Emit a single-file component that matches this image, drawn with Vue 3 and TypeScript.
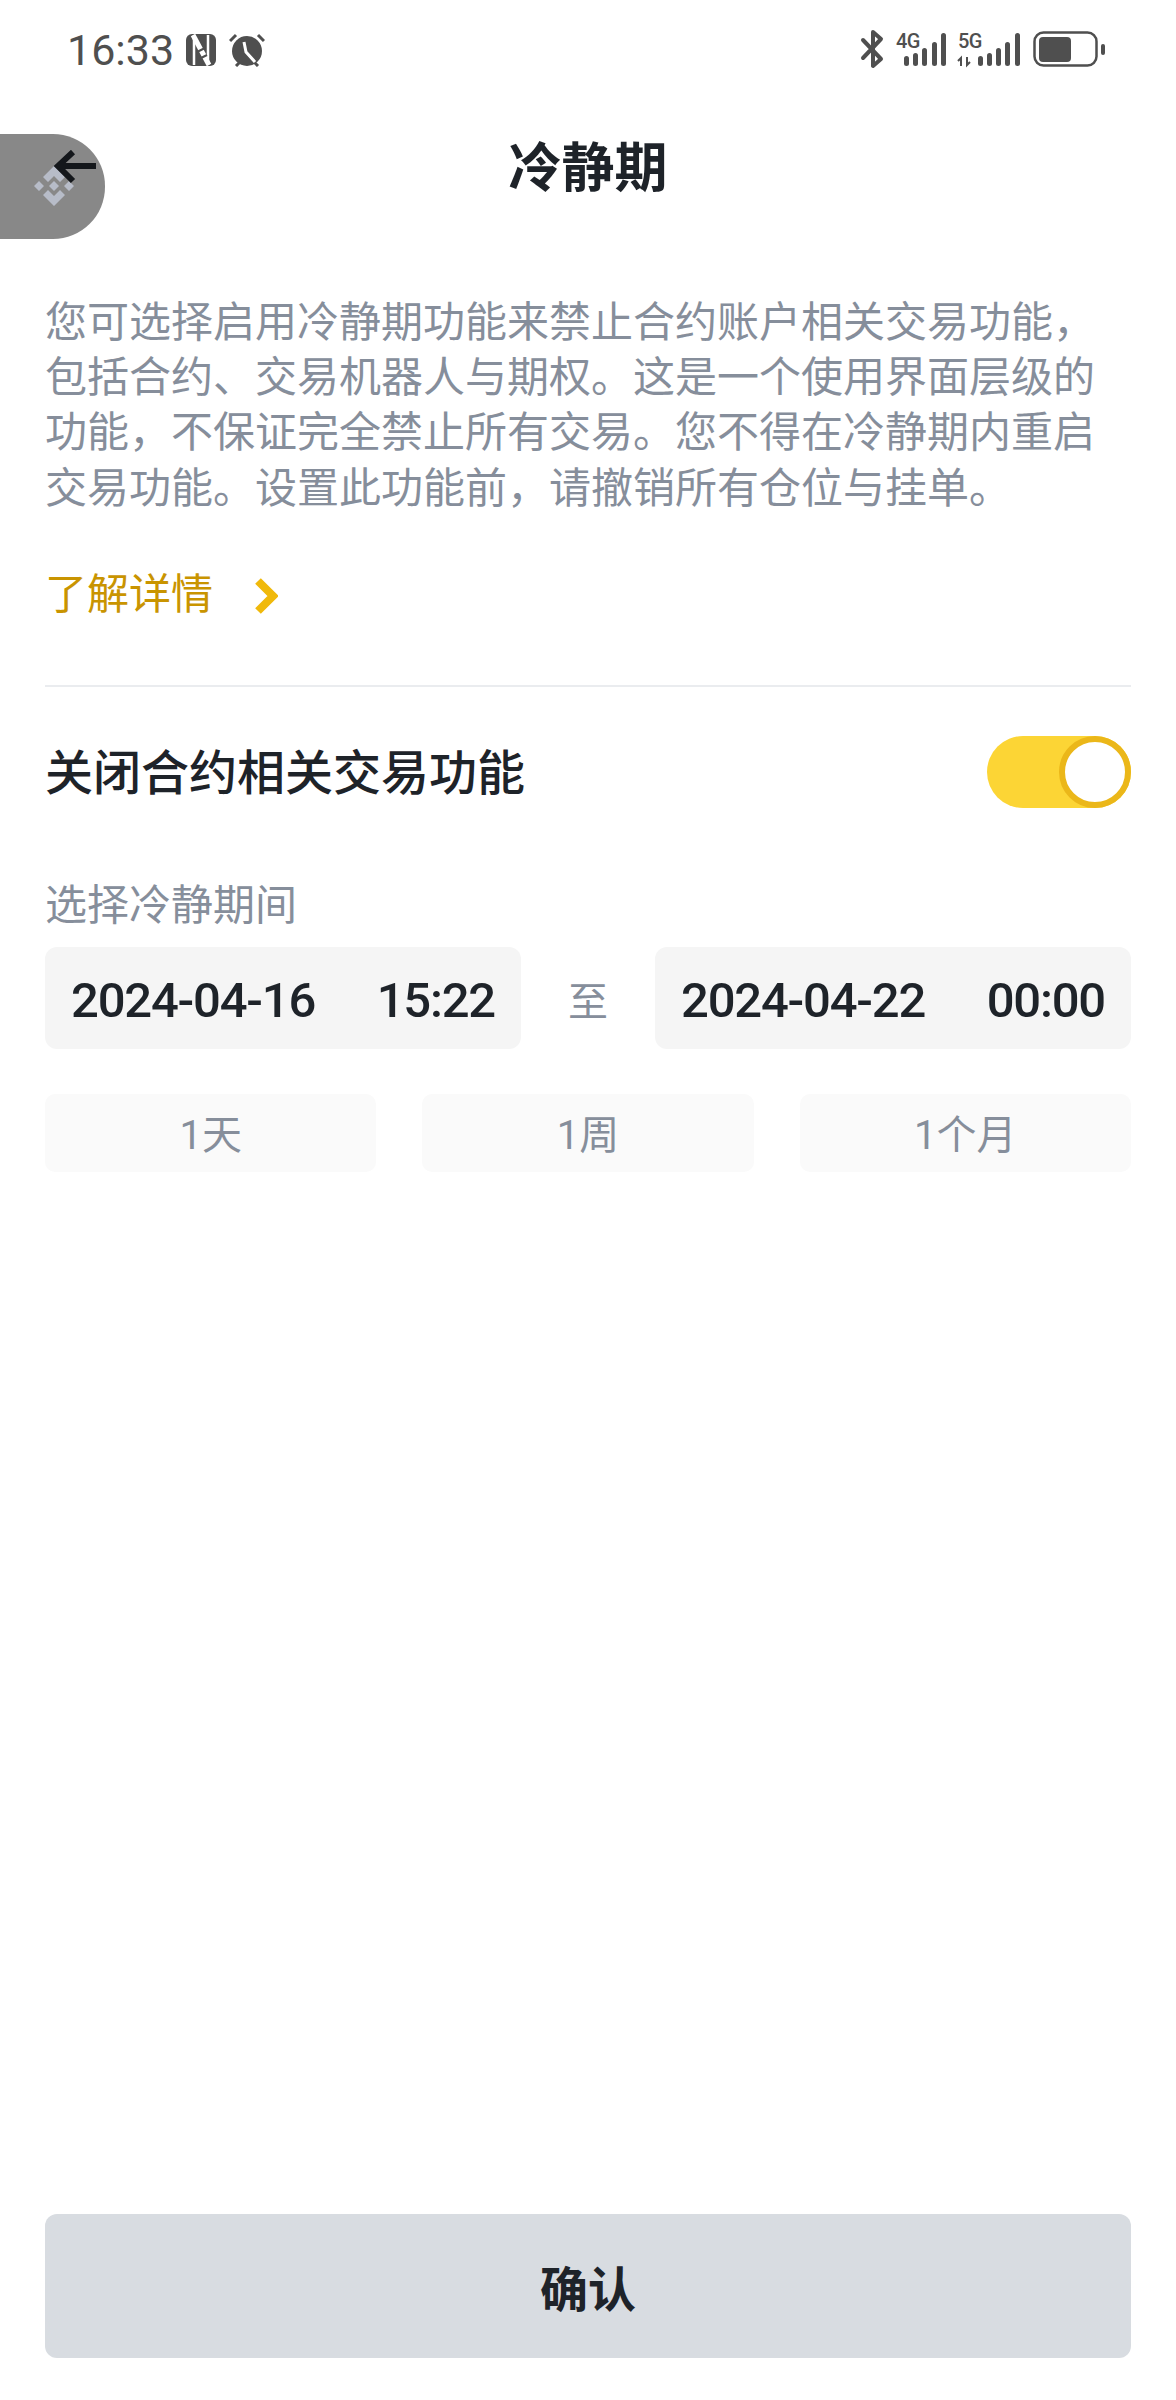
<script setup lang="ts">
const bars = (x: number[]) => x.map((v, i) => ({ x: v, y: [56, 53, 48, 42, 33][i], h: [10, 13, 18, 24, 33][i] }));
const bars4 = bars([44, 53, 62, 72, 81]);
const bars5 = bars([118, 127, 136, 145, 155]);
const presets: string[] = ['1天', '1周', '1个月'];
</script>

<template>
  <div class="page">
    <div class="status">
      <div class="status-left">
        <span class="clock">16:33</span>
        <svg class="nfc" width="32" height="34" viewBox="0 0 32 34">
          <rect x="1" y="1" width="30" height="32" rx="6" fill="#4f4f4f" />
          <path d="M9 32V2M23 32V2" fill="none" stroke="#fff" stroke-width="2.500" />
          <path d="M8 2l16 30" fill="none" stroke="#fff" stroke-width="5" />
          <path d="M12 19l8-4M14 26l8-4" fill="none" stroke="#4f4f4f" stroke-width="2" />
        </svg>
        <svg class="alarm" width="36" height="34" viewBox="0 0 36 34">
          <circle cx="18" cy="18" r="15" fill="#4f4f4f" />
          <path d="M1 8l6-6M35 8l-6-6M7 33l4-4M29 33l-4-4" stroke="#4f4f4f" stroke-width="3" fill="none" />
          <path d="M15 9l2 10 9 10" stroke="#fff" stroke-width="3" fill="none" />
        </svg>
      </div>
      <svg class="status-right" width="246" height="40" viewBox="860 30 246 40">
        <g transform="translate(860 0)">
          <path d="M3 40l18 19-8 7V32l8 7L3 58" fill="none" stroke="#4f4f4f" stroke-width="4" stroke-linejoin="round" stroke-linecap="round" />
          <text x="36" y="48" class="net">4G</text>
          <rect v-for="b in bars4" :key="'a' + b.x" :x="b.x" :y="b.y" width="5" :height="b.h" rx="2.5" fill="#4f4f4f" />
          <text x="98" y="48" class="net">5G</text>
          <path d="M101 66v-8l-3 3M107 57v8l3-3" fill="none" stroke="#4f4f4f" stroke-width="2" />
          <rect v-for="b in bars5" :key="'b' + b.x" :x="b.x" :y="b.y" width="5" :height="b.h" rx="2.5" fill="#4f4f4f" />
          <rect x="174.500" y="32.500" width="62" height="33" rx="9" fill="none" stroke="#4f4f4f" stroke-width="2.500" />
          <rect x="179" y="37" width="32" height="25" rx="4" fill="#4f4f4f" />
          <rect x="241" y="44" width="4" height="11" rx="2" fill="#4f4f4f" />
        </g>
      </svg>
    </div>

    <header class="header">
      <h1 class="title">冷静期</h1>
      <div class="pill">
        <svg class="logo" width="44" height="44" viewBox="0 0 44 44">
          <g fill="#b7bcc8">
            <path d="M22 2l11 11-5 5-6-6-6 6-5-5z" />
            <path d="M22 42L11 31l5-5 6 6 6-6 5 5z" />
            <path d="M22 17l5 5-5 5-5-5z" />
            <path d="M7 17l5 5-5 5-5-5zM37 17l5 5-5 5-5-5z" />
          </g>
        </svg>
      </div>
      <svg class="back" width="44" height="34" viewBox="0 0 44 34">
        <path d="M43 16H6M20 2L5 16l15 15" fill="none" stroke="#14171b" stroke-width="6" />
      </svg>
    </header>

    <main class="content">
      <p class="desc">您可选择启用冷静期功能来禁止合约账户相关交易功能，包括合约、交易机器人与期权。这是一个使用界面层级的功能，不保证完全禁止所有交易。您不得在冷静期内重启交易功能。设置此功能前，请撤销所有仓位与挂单。</p>
      <div class="more">
        <span>了解详情</span>
        <svg width="24" height="36" viewBox="0 0 24 36">
          <path d="M4 3l15 15L4 33" fill="none" stroke="#f0b90b" stroke-width="8" />
        </svg>
      </div>
      <div class="divider"></div>
      <div class="switch-row">
        <span class="switch-label">关闭合约相关交易功能</span>
        <div class="toggle"><div class="knob"></div></div>
      </div>
      <div class="period-label">选择冷静期间</div>
      <div class="dates">
        <div class="field"><span>2024-04-16</span><span>15:22</span></div>
        <span class="to">至</span>
        <div class="field"><span>2024-04-22</span><span>00:00</span></div>
      </div>
      <div class="presets">
        <div v-for="p in presets" :key="p" class="preset">{{ p }}</div>
      </div>
    </main>

    <div class="footer">
      <button class="confirm" type="button">确认</button>
    </div>
  </div>
</template>

<style>
html, body { background: #fff; }
</style>

<style scoped>
.page {
  position: relative;
  width: 1176px;
  height: 2400px;
  display: flex;
  flex-direction: column;
  background: #fff;
  font-family: Roboto, "Noto Sans CJK SC", sans-serif;
  color: #1e2329;
}
.status {
  height: 100px;
  padding: 0 70px 0 67px;
  display: flex;
  align-items: center;
  justify-content: space-between;
}
.status-left { display: flex; align-items: center; }
.clock { font-size: 43px; color: #4f4f4f; line-height: 1; }
.nfc { margin-left: 11px; }
.alarm { margin-left: 12px; }
.net { font: 500 20px Roboto, sans-serif; fill: #4f4f4f; letter-spacing: -0.5px; }
.header {
  position: relative;
  height: 132px;
  display: flex;
  align-items: center;
  justify-content: center;
}
.title { margin: 6px 0 0; font-size: 53px; font-weight: 700; line-height: 1; }
.pill {
  position: absolute;
  left: 0;
  top: 34px;
  width: 105px;
  height: 105px;
  background: #888;
  border-radius: 0 52px 52px 0;
}
.logo { position: absolute; left: 32px; top: 30px; }
.back { position: absolute; left: 53px; top: 50px; }
.content { padding: 63px 45px 0; flex: 1; }
.desc {
  margin: 0;
  font-size: 42px;
  line-height: 55.200px;
  color: #868e9b;
}
.more {
  margin-top: 47px;
  height: 56px;
  display: flex;
  align-items: center;
  font-size: 42px;
  color: #c99400;
}
.more svg { margin-left: 41px; margin-top: 10px; }
.divider { margin-top: 66px; height: 2px; background: #eaecef; }
.switch-row {
  margin-top: 49px;
  height: 72px;
  display: flex;
  align-items: center;
  justify-content: space-between;
}
.switch-label { margin-bottom: 5px; font-size: 48px; font-weight: 500; }
.toggle {
  position: relative;
  width: 144px;
  height: 72px;
  border-radius: 36px;
  background: #fcd535;
}
.knob {
  position: absolute;
  right: 0;
  top: 0;
  width: 72px;
  height: 72px;
  box-sizing: border-box;
  border: 6px solid #ebb719;
  border-radius: 50%;
  background: #fff;
}
.period-label {
  margin-top: 70px;
  height: 56px;
  line-height: 56px;
  font-size: 42px;
  color: #868e9b;
}
.dates {
  margin-top: 13px;
  display: flex;
  align-items: center;
  justify-content: space-between;
}
.field {
  width: 476px;
  height: 102px;
  box-sizing: border-box;
  padding: 5px 26px 0;
  display: flex;
  align-items: center;
  justify-content: space-between;
  background: #f5f5f5;
  border-radius: 12px;
  font-size: 49px;
  font-weight: 500;
  letter-spacing: -1.200px;
}
.to { margin-top: 3px; font-size: 40px; color: #868e9b; }
.presets {
  margin-top: 45px;
  display: grid;
  grid-template-columns: repeat(3, 1fr);
  gap: 46px;
}
.preset {
  height: 78px;
  box-sizing: border-box;
  padding-bottom: 2px;
  display: flex;
  align-items: center;
  justify-content: center;
  background: #fafafa;
  border-radius: 10px;
  font-size: 40px;
  color: #868e9b;
}
.footer { padding: 0 45px 42px; }
.confirm {
  display: block;
  width: 100%;
  height: 144px;
  border: 0;
  border-radius: 12px;
  background: #d8dce1;
  color: #1e2329;
  font-family: inherit;
  font-size: 48px;
  font-weight: 700;
}
</style>
